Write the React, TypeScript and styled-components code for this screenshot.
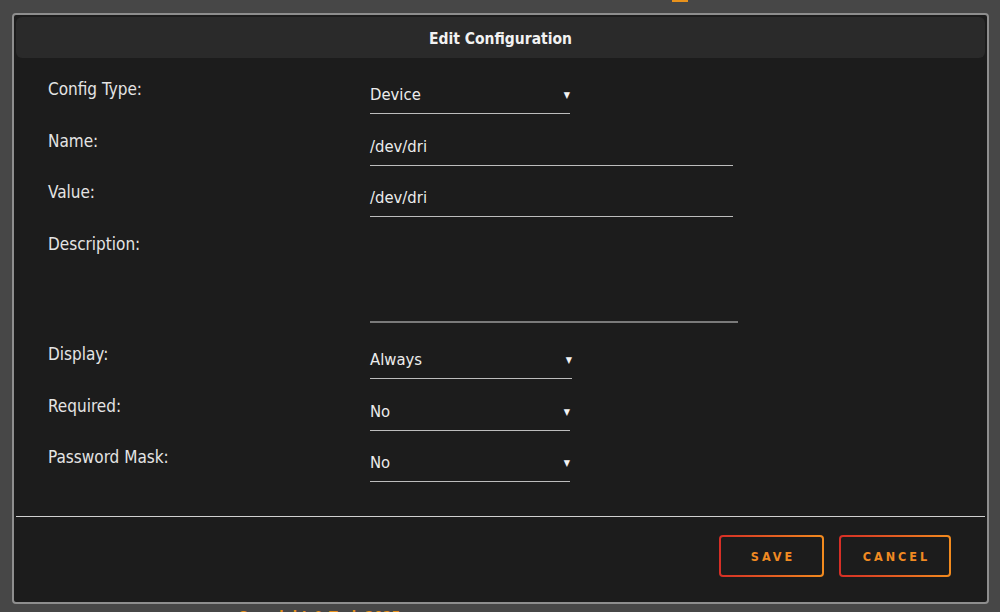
import styled, { createGlobalStyle } from 'styled-components'

const GlobalStyle = createGlobalStyle`
  * {
    box-sizing: border-box;
  }
  html, body {
    margin: 0;
    height: 100%;
    overflow: hidden;
    background: #474747;
    font-family: "DejaVu Sans Condensed", "DejaVu Sans", sans-serif;
  }
`

const Page = styled.div`
  display: flex;
  flex-direction: column;
  height: 612px;
`

const TopStrip = styled.div`
  height: 3px;
  flex-shrink: 0;
  padding-left: 672px;
`

const Logo = styled.div`
  width: 16px;
  height: 2px;
  background: #e8921c;
`

const Modal = styled.div`
  margin: 10px 11px 0 12px;
  height: 591px;
  flex-shrink: 0;
  display: flex;
  flex-direction: column;
  background: #1c1c1c;
  border: 2px solid #8e8e8e;
  border-radius: 4px;
`

const Header = styled.div`
  margin: 2px 2px 0;
  height: 41px;
  flex-shrink: 0;
  display: flex;
  align-items: center;
  justify-content: center;
  padding-top: 2px;
  background: #2a2a2a;
  border-radius: 6px;
  color: #f2f2f2;
  font-size: 15.5px;
  font-weight: 700;
`

const Form = styled.div`
  display: grid;
  grid-template-columns: 322px 1fr;
  row-gap: 16.5px;
  padding: 21px 0 0 34px;
  flex: 1;
  align-content: start;
`

const Label = styled.div`
  color: #e4e4e4;
  font-size: 17px;
  line-height: 20px;
`

const Field = styled.div<{ $width: number; $height?: number; $thick?: boolean }>`
  width: ${(p) => p.$width}px;
  height: ${(p) => p.$height ?? 35}px;
  display: flex;
  align-items: flex-start;
  justify-content: space-between;
  padding-top: 6px;
  color: #ececec;
  font-size: 16.5px;
  line-height: 20px;
  border-bottom: ${(p) => (p.$thick ? '2px solid #7a7a7a' : '1px solid #bdbdbd')};
`

const Arrow = styled.span`
  font-size: 9px;
  line-height: 20px;
  color: #f2f2f2;
`

const Divider = styled.div`
  margin: 0 2px;
  height: 1px;
  flex-shrink: 0;
  background: #d0d0d0;
`

const Footer = styled.div`
  display: flex;
  justify-content: flex-end;
  gap: 15px;
  padding: 18px 36px 25px 0;
`

const Button = styled.button<{ $width: number }>`
  width: ${(p) => p.$width}px;
  height: 42px;
  border: 2px solid transparent;
  border-radius: 4px;
  background:
    linear-gradient(#1c1c1c, #1c1c1c) padding-box,
    linear-gradient(90deg, #d52e26, #f28b1e) border-box;
  color: #f08a22;
  font-family: "DejaVu Sans Condensed", "DejaVu Sans", sans-serif;
  font-size: 12.5px;
  font-weight: 700;
  letter-spacing: 3px;
  padding: 0 0 0 3px;
  cursor: pointer;
`

const Copyright = styled.div`
  padding: 4px 0 0 238px;
  color: #e8921c;
  font-size: 14px;
  font-weight: 700;
`

const rows = [
  { label: 'Config Type:', value: 'Device', width: 200, select: true },
  { label: 'Name:', value: '/dev/dri', width: 363 },
  { label: 'Value:', value: '/dev/dri', width: 363 },
]

const lower = [
  { label: 'Display:', value: 'Always', width: 202 },
  { label: 'Required:', value: 'No', width: 200 },
  { label: 'Password Mask:', value: 'No', width: 200 },
]

const App = () => {
  return (
    <Page>
      <GlobalStyle />
      <TopStrip>
        <Logo />
      </TopStrip>
      <Modal>
        <Header>Edit Configuration</Header>
        <Form>
          {rows.map((r) => (
            <>
              <Label key={r.label}>{r.label}</Label>
              <Field $width={r.width}>
                <span>{r.value}</span>
                {r.select && <Arrow>▼</Arrow>}
              </Field>
            </>
          ))}
          <Label>Description:</Label>
          <Field $width={368} $height={89} $thick style={{ marginBottom: 5 }} />
          {lower.map((r) => (
            <>
              <Label key={r.label}>{r.label}</Label>
              <Field $width={r.width}>
                <span>{r.value}</span>
                <Arrow>▼</Arrow>
              </Field>
            </>
          ))}
        </Form>
        <Divider />
        <Footer>
          <Button $width={105}>SAVE</Button>
          <Button $width={112}>CANCEL</Button>
        </Footer>
      </Modal>
      <Copyright>Copyright © Tech 2025</Copyright>
    </Page>
  )
}

export default App
